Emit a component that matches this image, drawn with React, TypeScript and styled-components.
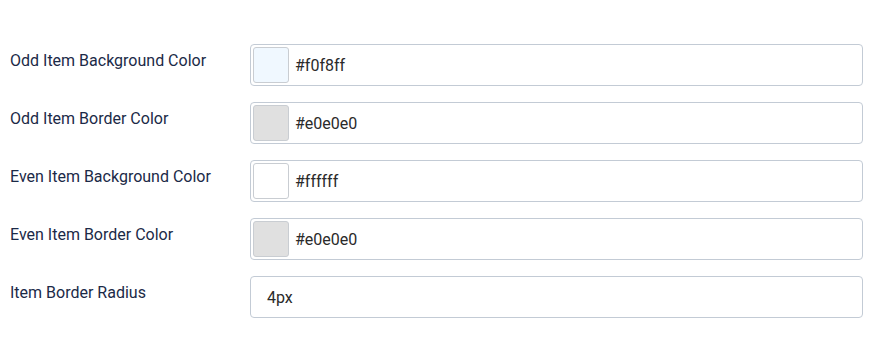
import styled, { createGlobalStyle } from "styled-components";

const Global = createGlobalStyle`
  body {
    margin: 0;
    background: #ffffff;
    font-family: Roboto, "Liberation Sans", Arial, sans-serif;
  }
`;

const Form = styled.div`
  padding: 44px 11px 0 10px;
  display: flex;
  flex-direction: column;
  gap: 16px;
`;

const Row = styled.div`
  display: grid;
  grid-template-columns: 240px 1fr;
  align-items: start;
`;

const Label = styled.label`
  font-size: 16px;
  color: #1b2a47;
  padding-top: 7px;
  line-height: 20px;
`;

const Field = styled.div<{ $plain?: boolean }>`
  box-sizing: border-box;
  height: 42px;
  border: 1px solid #c3cbd5;
  border-radius: 4px;
  display: flex;
  align-items: center;
  gap: 6px;
  padding: 0 ${(p) => (p.$plain ? "16px" : "2px")};
  font-size: 16px;
  color: #2a2a2a;
  background: #fff;
`;

const Swatch = styled.span<{ $color: string }>`
  box-sizing: border-box;
  width: 36px;
  height: 36px;
  border: 1px solid #c9cdd2;
  border-radius: 3px;
  background: ${(p) => p.$color};
`;

const rows = [
  { label: "Odd Item Background Color", value: "#f0f8ff" },
  { label: "Odd Item Border Color", value: "#e0e0e0" },
  { label: "Even Item Background Color", value: "#ffffff" },
  { label: "Even Item Border Color", value: "#e0e0e0" },
];

export default function App() {
  return (
    <>
      <Global />
      <Form>
        {rows.map((r) => (
          <Row key={r.label}>
            <Label>{r.label}</Label>
            <Field>
              <Swatch $color={r.value} />
              {r.value}
            </Field>
          </Row>
        ))}
        <Row>
          <Label>Item Border Radius</Label>
          <Field $plain>4px</Field>
        </Row>
      </Form>
    </>
  );
}
